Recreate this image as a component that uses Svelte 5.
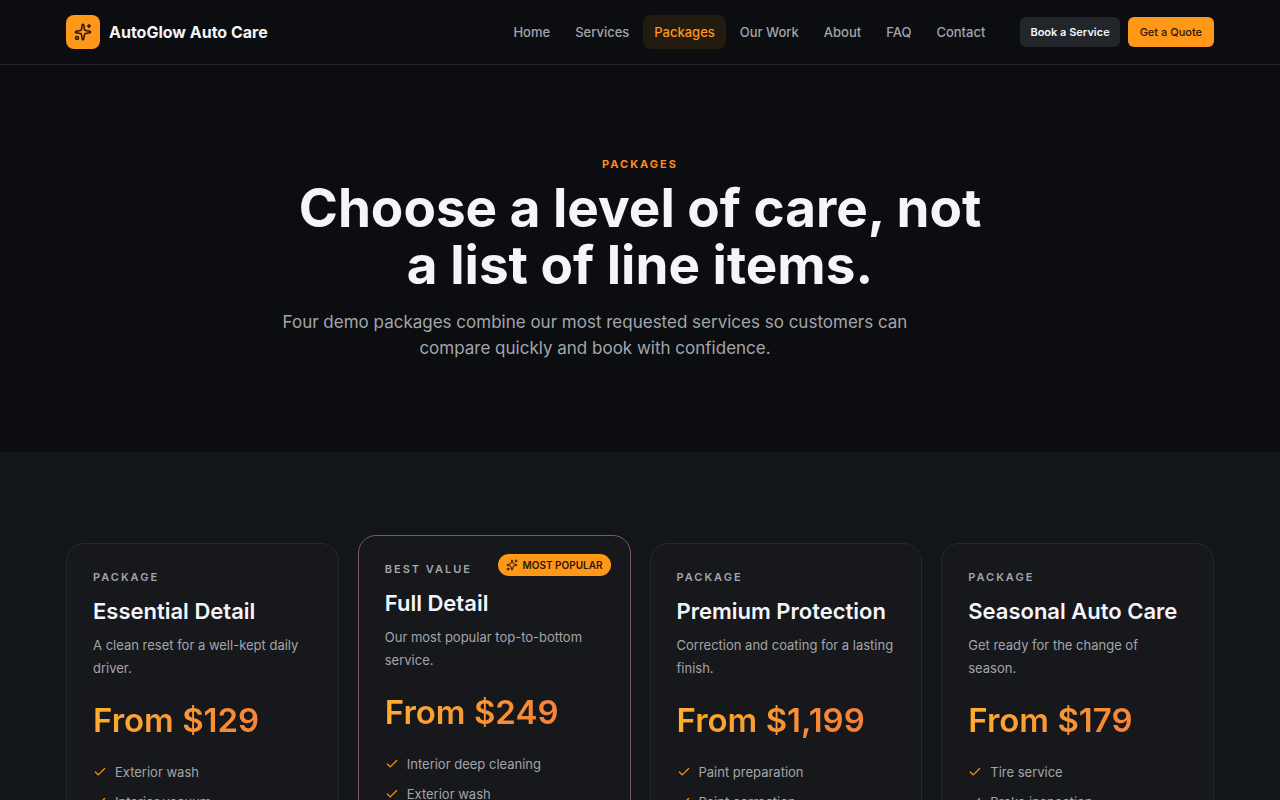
<script>
    const links = ["Home", "Services", "Packages", "Our Work", "About", "FAQ", "Contact"];
    const current = "Packages";

    const packages = [
        {
            label: "Package",
            name: "Essential Detail",
            text: "A clean reset for a well-kept daily driver.",
            price: "From $129",
            items: ["Exterior wash", "Interior vacuum"]
        },
        {
            label: "Best value",
            name: "Full Detail",
            text: "Our most popular top-to-bottom service.",
            price: "From $249",
            items: ["Interior deep cleaning", "Exterior wash"],
            popular: true
        },
        {
            label: "Package",
            name: "Premium Protection",
            text: "Correction and coating for a lasting finish.",
            price: "From $1,199",
            items: ["Paint preparation", "Paint correction"]
        },
        {
            label: "Package",
            name: "Seasonal Auto Care",
            text: "Get ready for the change of season.",
            price: "From $179",
            items: ["Tire service", "Brake inspection"]
        }
    ];
</script>

{#snippet sparkles()}
    <svg class="sparkles" viewBox="0 0 24 24" aria-hidden="true">
        <path d="M11 2.800a1 1 0 0 1 2 0l1 5.600a2 2 0 0 0 1.600 1.600l5.600 1a1 1 0 0 1 0 2l-5.600 1a2 2 0 0 0-1.600 1.600l-1 5.600a1 1 0 0 1-2 0l-1-5.600a2 2 0 0 0-1.600-1.600l-5.600-1a1 1 0 0 1 0-2l5.600-1a2 2 0 0 0 1.600-1.600z" />
        <path d="M20 2v4M22 4h-4" />
        <circle cx="4" cy="20" r="2" />
    </svg>
{/snippet}

<header>
    <a class="brand" href="#home">
        <span class="logo">{@render sparkles()}</span>
        AutoGlow Auto Care
    </a>
    <nav>
        {#each links as link}
            <a href="#{link}" class:active={link === current}>{link}</a>
        {/each}
    </nav>
    <div class="actions">
        <button class="dark">Book a Service</button>
        <button>Get a Quote</button>
    </div>
</header>

<main>
    <section class="hero">
        <div class="intro">
            <p class="eyebrow">Packages</p>
            <h1>Choose a level of care, not a list of line items.</h1>
            <p class="lead">
                Four demo packages combine our most requested services so customers can compare
                quickly and book with confidence.
            </p>
        </div>
    </section>

    <section class="packages">
        {#each packages as pack}
            <article class:popular={pack.popular}>
                {#if pack.popular}
                    <span class="badge">{@render sparkles()} Most popular</span>
                {/if}
                <p class="label">{pack.label}</p>
                <h2>{pack.name}</h2>
                <p class="text">{pack.text}</p>
                <p class="price">{pack.price}</p>
                <ul>
                    {#each pack.items as item}
                        <li>
                            <svg viewBox="0 0 24 24" aria-hidden="true"><path d="M20 6 9 17l-5-5" /></svg>
                            {item}
                        </li>
                    {/each}
                </ul>
            </article>
        {/each}
    </section>
</main>

<style>
    :global(body) {
        background-color: #0b0d10;
        color: #f4f5f9;
        font-family: "Inter", sans-serif;
    }

    p, h1, h2, ul {
        margin: 0;
        padding: 0;
    }

    svg {
        fill: none;
        stroke: currentColor;
        stroke-width: 2;
        stroke-linecap: round;
        stroke-linejoin: round;
        flex-shrink: 0;
    }

    header {
        display: flex;
        align-items: center;
        height: 64px;
        padding: 0 66px;
        border-bottom: 1px solid #232529;
    }

    .brand {
        display: flex;
        align-items: center;
        gap: 9px;
        color: #f4f5f9;
        font-size: 16px;
        font-weight: 700;
        text-decoration: none;
        white-space: nowrap;
    }

    .logo {
        display: flex;
        align-items: center;
        justify-content: center;
        width: 34px;
        height: 34px;
        border-radius: 8px;
        background-color: #ff9718;
        color: #2a1806;
    }

    .logo .sparkles {
        width: 18px;
        height: 18px;
    }

    nav {
        display: flex;
        gap: 3px;
        margin-left: auto;
        margin-right: 24px;
    }

    nav a {
        padding: 0 11px;
        border-radius: 8px;
        color: #a3a5aa;
        font-size: 13px;
        font-weight: 500;
        line-height: 34px;
        text-decoration: none;
        white-space: nowrap;
    }

    nav a.active {
        background-color: #231a10;
        color: #ff9718;
    }

    .actions {
        display: flex;
        gap: 8px;
    }

    button {
        height: 30px;
        padding: 0 12px;
        border: 0;
        border-radius: 6px;
        background-color: #ff9718;
        color: #2a1806;
        font-family: inherit;
        font-size: 11px;
        font-weight: 500;
        white-space: nowrap;
        cursor: pointer;
    }

    button.dark {
        padding: 0 10px;
        background-color: #22262b;
        color: #f4f5f9;
        font-weight: 600;
    }

    .hero {
        padding: 90px 24px 91px;
    }

    .intro {
        max-width: 730px;
        margin: 0 auto;
        text-align: center;
    }

    .eyebrow {
        color: #ff8a1f;
        font-size: 11px;
        font-weight: 700;
        letter-spacing: 2px;
        line-height: 18px;
        text-transform: uppercase;
    }

    h1 {
        margin-top: 7px;
        padding: 0 12px;
        font-size: 53px;
        font-weight: 700;
        line-height: 57px;
    }

    .lead {
        max-width: 640px;
        margin-top: 15px;
        color: #a3a5aa;
        font-size: 17px;
        line-height: 26px;
    }

    .packages {
        display: grid;
        grid-template-columns: repeat(4, 1fr);
        gap: 19px;
        padding: 91px 66px;
        background-color: #121619;
    }

    article {
        position: relative;
        padding: 25px 26px;
        border: 1px solid #26282c;
        border-radius: 18px;
        background-color: #17181b;
    }

    article.popular {
        margin-top: -8px;
        margin-bottom: 8px;
        border-color: #805669;
    }

    .badge {
        position: absolute;
        top: 18px;
        right: 19px;
        display: flex;
        align-items: center;
        gap: 5px;
        padding: 0 8px;
        border-radius: 11px;
        background-color: #ff9718;
        color: #2a1806;
        font-size: 10px;
        font-weight: 600;
        line-height: 22px;
        text-transform: uppercase;
    }

    .badge .sparkles {
        width: 12px;
        height: 12px;
    }

    .label {
        color: #a3a5aa;
        font-size: 11px;
        font-weight: 600;
        letter-spacing: 2px;
        line-height: 16px;
        text-transform: uppercase;
    }

    h2 {
        margin-top: 12px;
        font-size: 22px;
        font-weight: 600;
        line-height: 28px;
        white-space: nowrap;
    }

    .text {
        margin-top: 9px;
        color: #a3a5aa;
        font-size: 13px;
        line-height: 23px;
    }

    .price {
        margin-top: 19px;
        background-image: linear-gradient(120deg, #ffb02e, #f5803a 80%, #e8703f);
        background-clip: text;
        color: transparent;
        font-size: 33px;
        font-weight: 600;
        line-height: 42px;
        white-space: nowrap;
    }

    ul {
        display: grid;
        gap: 8px;
        margin-top: 20px;
        list-style: none;
    }

    li {
        display: flex;
        align-items: center;
        gap: 8px;
        color: #a3a5aa;
        font-size: 13px;
        line-height: 22px;
    }

    li svg {
        width: 14px;
        height: 14px;
        color: #ff9718;
    }

    @media (max-width: 1000px) {
        header {
            flex-wrap: wrap;
            height: auto;
            gap: 12px;
            padding: 15px 24px;
        }

        .packages {
            grid-template-columns: repeat(auto-fit, minmax(260px, 1fr));
            padding: 64px 24px;
        }
    }
</style>
